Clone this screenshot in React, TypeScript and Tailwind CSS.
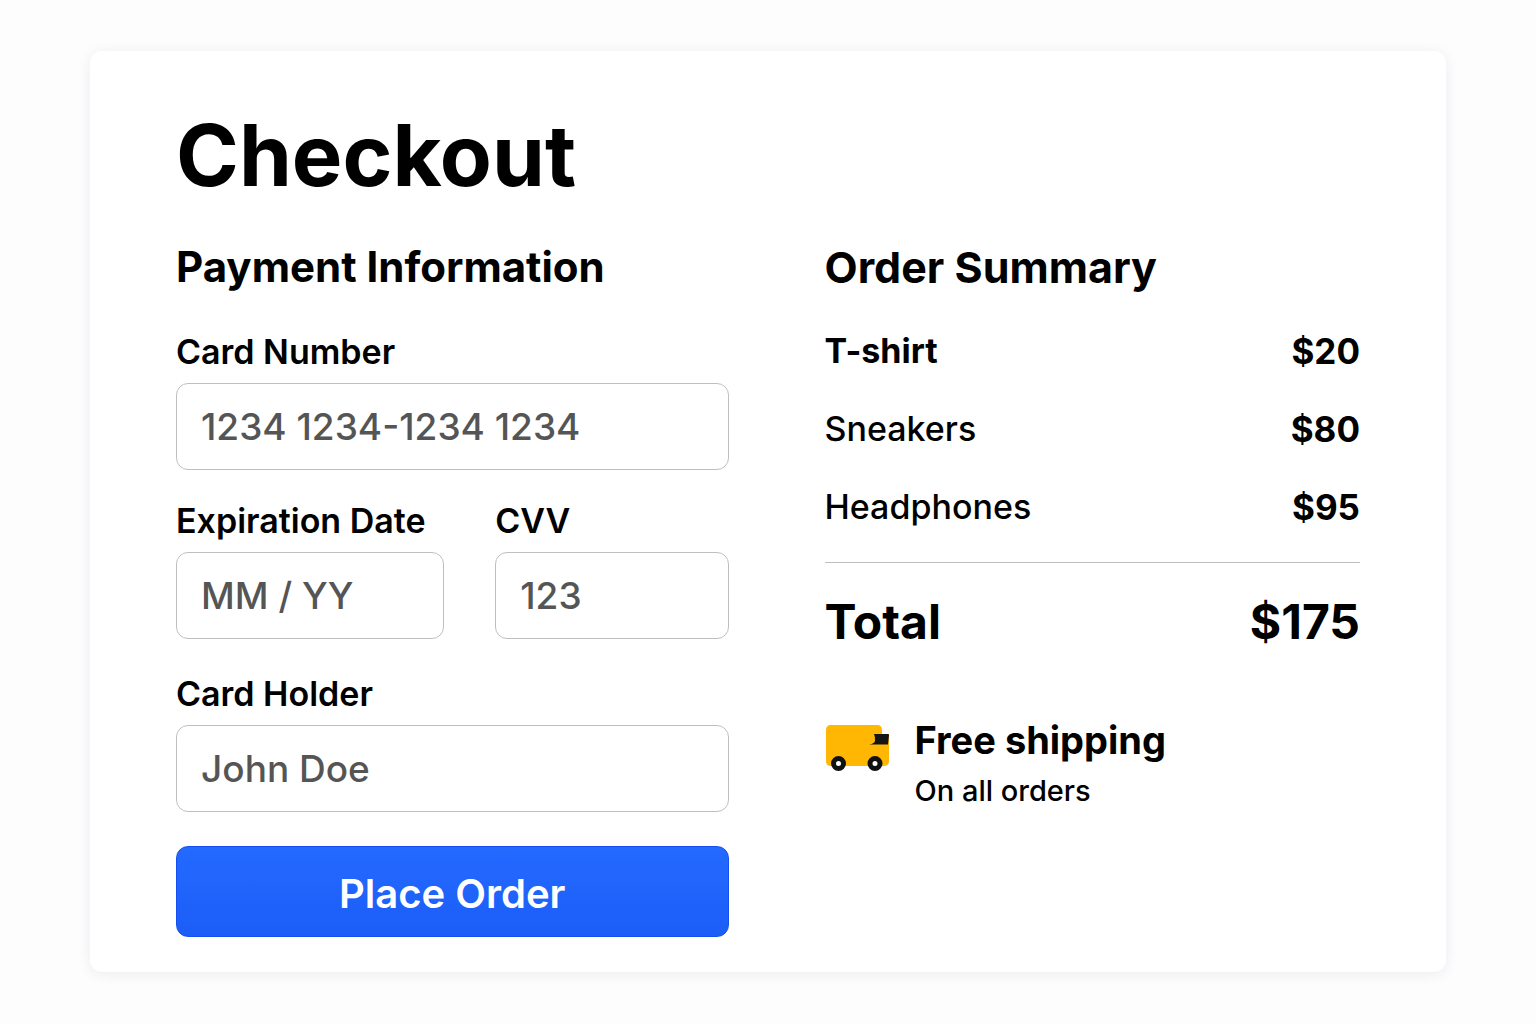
import { useId } from "react";

const items = [
  { name: "T-shirt", price: "$20", weight: "font-bold" },
  { name: "Sneakers", price: "$80", weight: "font-medium" },
  { name: "Headphones", price: "$95", weight: "font-medium" },
];

function Field({ label, placeholder }: { label: string; placeholder: string }) {
  const id = useId();
  return (
    <div className="flex min-w-0 flex-col">
      <label htmlFor={id} className="mb-2 text-[34px] leading-[46px] font-semibold">
        {label}
      </label>
      <input
        id={id}
        type="text"
        placeholder={placeholder}
        className="h-[87px] w-full rounded-xl border border-[#bfbfc1] bg-white px-6 text-[37px] font-medium text-[#555555] placeholder:text-[#555555] placeholder:opacity-100"
      />
    </div>
  );
}

function Truck() {
  return (
    <svg viewBox="0 0 66 48" className="mt-2 h-12 w-[66px] shrink-0" aria-hidden="true">
      <path
        d="M6 0H52Q57 0 57 5V9H64V36Q64 41 59 41H6Q1 41 1 36V5Q1 0 6 0Z"
        fill="#ffb703"
      />
      <path d="M49 9H63Q64 9 64 10L63 19.500H44Q50 18.500 50 15.500Q50 11 49 9Z" fill="#151515" />
      <circle cx="13.500" cy="38.500" r="5" fill="#fff" stroke="#111" strokeWidth="5" />
      <circle cx="50" cy="38.500" r="5" fill="#fff" stroke="#111" strokeWidth="5" />
    </svg>
  );
}

export default function App() {
  return (
    <div className="min-h-screen bg-[#fdfdfe] px-[90px] py-[51px] font-['Inter',sans-serif] text-black">
      <main className="rounded-xl bg-white px-[86px] pt-[52px] pb-[35px] shadow-[0_2px_14px_rgba(30,40,70,0.08)]">
        <h1 className="text-[85px] leading-[106px] font-bold">Checkout</h1>
        <div className="mt-8 grid grid-cols-[552fr_535fr] gap-24">
          <form onSubmit={(e) => e.preventDefault()}>
            <h2 className="text-[42px] leading-[52px] font-bold">Payment Information</h2>
            <div className="mt-9 flex flex-col">
              <Field label="Card Number" placeholder="1234 1234-1234 1234" />
              <div className="mt-7 mb-8 grid grid-cols-[268fr_233fr] gap-[51px]">
                <Field label="Expiration Date" placeholder="MM / YY" />
                <Field label="CVV" placeholder="123" />
              </div>
              <Field label="Card Holder" placeholder="John Doe" />
            </div>
            <button
              type="submit"
              className="mt-[34px] h-[91px] w-full rounded-xl border border-[#1450f0] bg-linear-to-b from-[#246aff] to-[#1c5df8] pt-1 text-[40px] font-semibold text-white"
            >
              Place Order
            </button>
          </form>
          <section>
            <h2 className="text-[43px] leading-[52px] font-bold">Order Summary</h2>
            <ul className="mt-9 flex flex-col gap-[34px]">
              {items.map((item) => (
                <li key={item.name} className="flex justify-between text-[34px] leading-[44px]">
                  <span className={item.weight}>{item.name}</span>
                  <span className="text-[35px] font-bold">{item.price}</span>
                </li>
              ))}
            </ul>
            <div className="mt-[33px] flex justify-between border-t border-[#bfbfc1] pt-[29px] text-[48px] leading-[60px] font-bold">
              <span>Total</span>
              <span>$175</span>
            </div>
            <div className="mt-[65px] flex gap-6">
              <Truck />
              <div>
                <p className="text-[38px] leading-[46px] font-bold">Free shipping</p>
                <p className="mt-[10px] text-[29px] leading-[36px] font-medium">On all orders</p>
              </div>
            </div>
          </section>
        </div>
      </main>
    </div>
  );
}
